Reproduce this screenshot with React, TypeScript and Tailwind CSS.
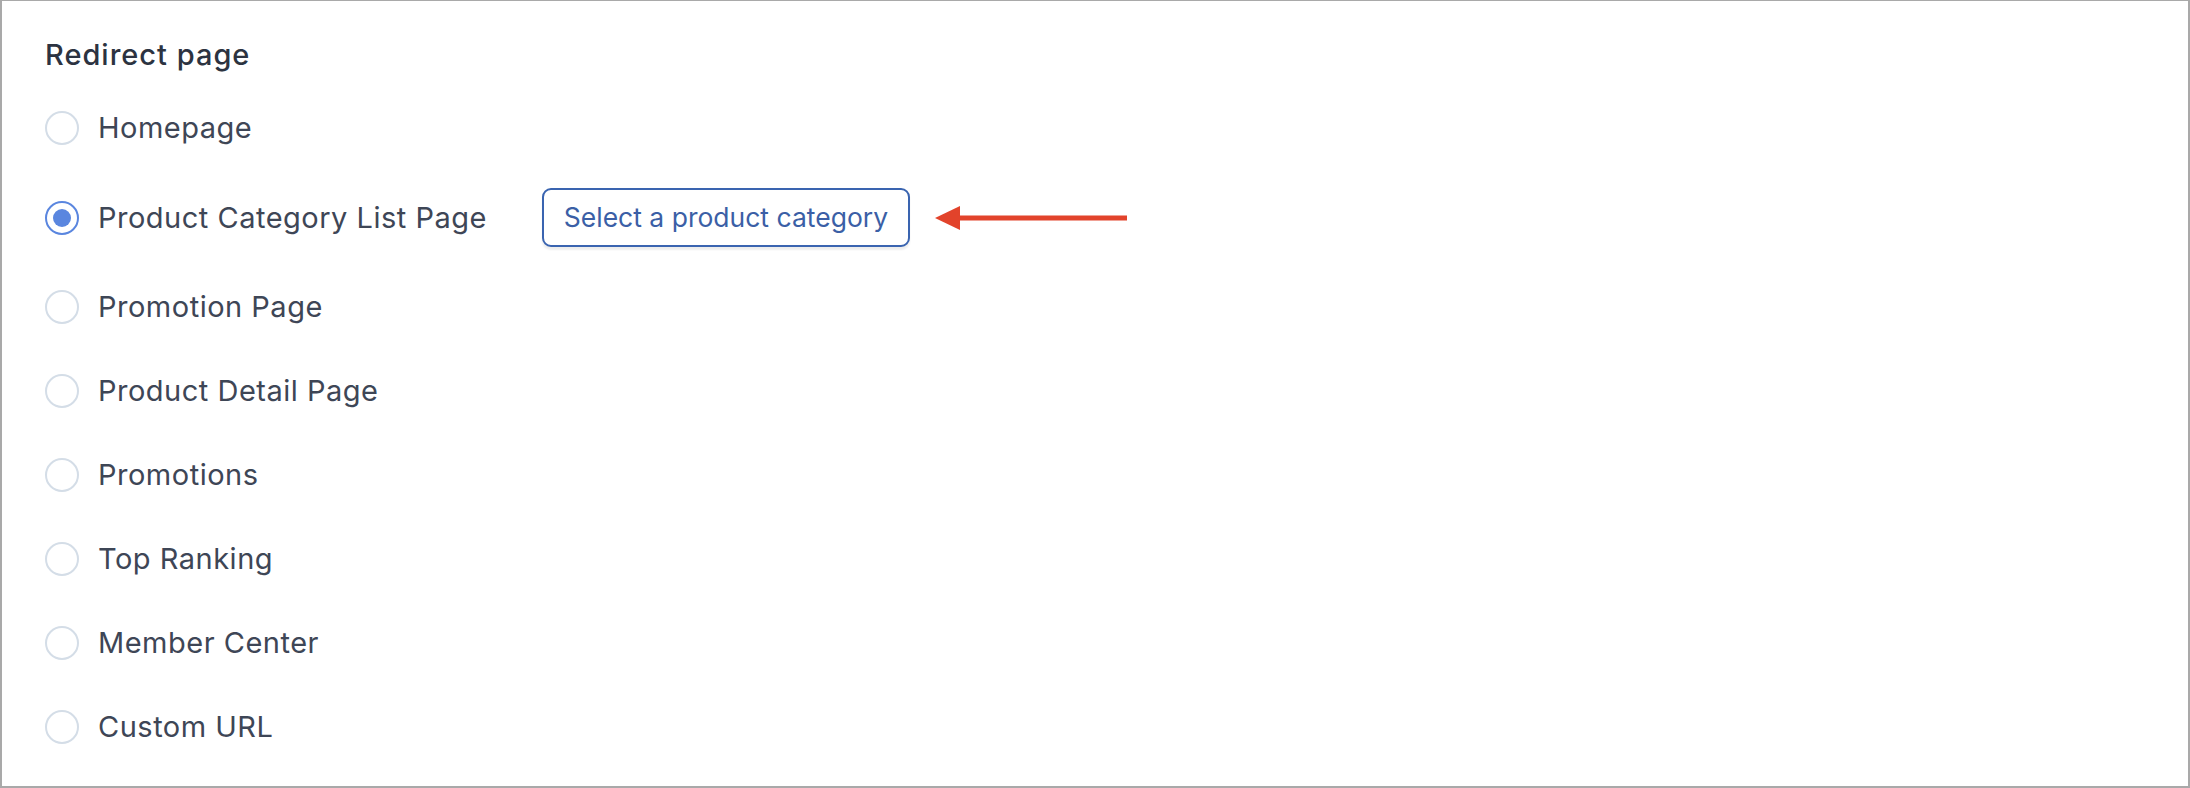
import { useState } from 'react';

const options = [
  'Homepage',
  'Product Category List Page',
  'Promotion Page',
  'Product Detail Page',
  'Promotions',
  'Top Ranking',
  'Member Center',
  'Custom URL',
];

const Radio = ({ checked }: { checked: boolean }) => (
  <span
    className={`flex items-center justify-center w-[34px] h-[34px] shrink-0 rounded-full border-2 bg-white ${
      checked ? 'border-[#5a86df]' : 'border-[#d4dde7]'
    }`}
  >
    {checked && <span className="block w-[18px] h-[18px] rounded-full bg-[#5a86df]" />}
  </span>
);

const Arrow = () => (
  <svg width="192" height="24" viewBox="0 0 192 24" className="ml-[25px]">
    <polygon points="0,12 25,0 25,24" fill="#e2432b" />
    <rect x="24" y="9.5" width="168" height="5" fill="#e2432b" />
  </svg>
);

const App = () => {
  const [selected, setSelected] = useState('Product Category List Page');

  return (
    <div
      className="w-[2190px] h-[788px] bg-white border-x-2 border-t border-b-2 border-[#a9a9a9] text-[#3e4656]"
      style={{ fontFamily: 'Inter, "Noto Sans", sans-serif' }}
    >
      <div className="pl-[43px] pt-[34px]">
        <h2 className="text-[29px] leading-[40px] font-medium tracking-[1px] text-[#2c3341]">
          Redirect page
        </h2>
        <div className="mt-[29px] flex flex-col gap-[36px]">
          {options.map((opt) => {
            const checked = opt === selected;
            return (
              <div key={opt} className="flex items-center min-h-[48px]">
                <label
                  className="flex items-center gap-[19px] cursor-pointer"
                  onClick={() => setSelected(opt)}
                >
                  <Radio checked={checked} />
                  <span className="text-[29px] leading-[48px] tracking-[0.5px]">{opt}</span>
                </label>
                {opt === 'Product Category List Page' && (
                  <>
                    <button className="ml-[55px] h-[59px] w-[368px] rounded-[9px] border-[2px] border-[#3a64b0] bg-white text-[26.5px] text-[#3b5fa6] shadow-[0_3px_2px_rgba(0,0,0,0.07)]">
                      Select a product category
                    </button>
                    <Arrow />
                  </>
                )}
              </div>
            );
          })}
        </div>
      </div>
    </div>
  );
};

export default App;
